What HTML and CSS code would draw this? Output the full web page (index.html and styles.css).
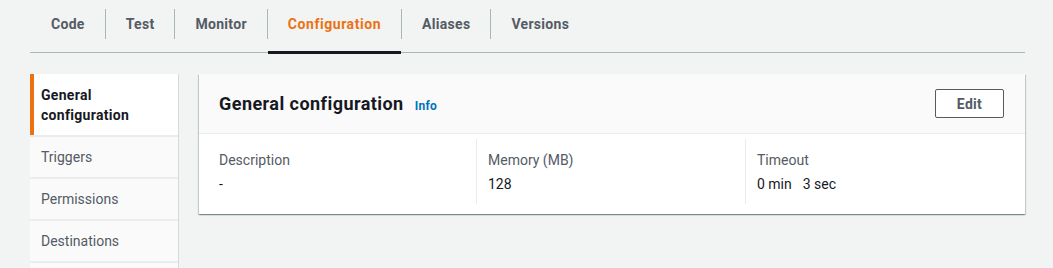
FILE: index.html
```html
<!DOCTYPE html>
<html>
<head>
<meta charset="utf-8">
<link rel="stylesheet" href="styles.css">
</head>
<body>
<div class="tabs">
  <div class="tab"><span class="tab-label first">Code</span></div>
  <div class="tab"><span class="tab-label">Test</span></div>
  <div class="tab"><span class="tab-label">Monitor</span></div>
  <div class="tab active"><span class="tab-label wide">Configuration</span></div>
  <div class="tab"><span class="tab-label">Aliases</span></div>
  <div class="tab"><span class="tab-label">Versions</span></div>
</div>
<div class="main">
  <nav class="sidenav">
    <div class="nav-item active">General<br>configuration</div>
    <div class="nav-item">Triggers</div>
    <div class="nav-item">Permissions</div>
    <div class="nav-item">Destinations</div>
    <div class="nav-item last"></div>
  </nav>
  <section class="card">
    <div class="card-header">
      <div class="card-title"><h2>General configuration</h2><a class="info">Info</a></div>
      <button class="btn">Edit</button>
    </div>
    <div class="card-body">
      <div class="col col-1">
        <div class="label">Description</div>
        <div class="value">-</div>
      </div>
      <div class="col col-2">
        <div class="label">Memory (MB)</div>
        <div class="value">128</div>
      </div>
      <div class="col col-3">
        <div class="label">Timeout</div>
        <div class="value">0 min<span class="gap"></span>3 sec</div>
      </div>
    </div>
  </section>
</div>
</body>
</html>
```

FILE: styles.css
```css
* { box-sizing: border-box; }
html, body { margin: 0; padding: 0; overflow: hidden; }
body {
  background: #f2f3f3;
  font-family: Roboto, "Liberation Sans", sans-serif;
  font-size: 14px;
  color: #16191f;
  width: 1053px;
  height: 268px;
}
.tabs {
  display: flex;
  margin-left: 30px;
  width: 995px;
  height: 53px;
  border-bottom: 1px solid #aab7b8;
}
.tab {
  position: relative;
  padding-top: 9px;
  height: 52px;
}
.tab-label {
  display: block;
  padding: 0 20px;
  line-height: 30px;
  height: 30px;
  border-left: 1px solid #aab7b8;
  font-weight: 700;
  letter-spacing: 0.3px;
  color: #545b64;
}
.tab-label.wide { letter-spacing: 0.55px; }
.tab-label.first { border-left-color: transparent; }
.tab.active .tab-label { color: #ec7211; }
.tab.active::after {
  content: "";
  position: absolute;
  left: 1px;
  right: 0;
  bottom: -2px;
  height: 3px;
  background: #16191f;
}
.main {
  display: flex;
  gap: 20px;
  padding: 21px 28px 0 30px;
}
.sidenav {
  width: 149px;
  display: flex;
  flex-direction: column;
  gap: 2px;
  background: #eaeded;
  border-right: 1px solid #d5dbdb;
}
.nav-item {
  background: #fafafa;
  height: 40px;
  line-height: 40px;
  padding-left: 11px;
  color: #545b64;
  flex: none;
}
.nav-item.active {
  background: #fff;
  height: 61px;
  line-height: 20px;
  padding-top: 11px;
  font-weight: 700;
  letter-spacing: 0.3px;
  color: #16191f;
  border-left: 4px solid #ec7211;
  padding-left: 7px;
}
.card {
  flex: 1;
  align-self: flex-start;
  background: #fff;
  box-shadow: 0 1px 1px 0 rgba(0,28,36,.3), 1px 1px 1px 0 rgba(0,28,36,.15), -1px 1px 1px 0 rgba(0,28,36,.15);
}
.card-header {
  display: flex;
  align-items: center;
  justify-content: space-between;
  height: 60px;
  padding: 0 21px 0 20px;
  background: #fafafa;
  border-bottom: 1px solid #eaeded;
}
.card-title { display: flex; align-items: baseline; gap: 11px; }
.card-title h2 {
  margin: 0;
  font-size: 18px;
  font-weight: 700;
  letter-spacing: 0.45px;
  color: #16191f;
}
.info {
  font-size: 12px;
  font-weight: 700;
  letter-spacing: 0.3px;
  color: #0073bb;
}
.btn {
  font-family: inherit;
  font-size: 14px;
  font-weight: 700;
  letter-spacing: 0.3px;
  color: #545b64;
  background: #fff;
  border: 1px solid #545b64;
  border-radius: 2px;
  width: 69px;
  height: 29px;
  padding: 0;
}
.card-body {
  display: grid;
  grid-template-columns: 257px 269px 1fr;
  padding: 5px 20px 10px 20px;
}
.col {
  padding: 9px 12px 8px 11px;
  border-left: 1px solid #eaeded;
  line-height: 24px;
}
.col-1 { border-left: none; padding-left: 0; }
.label { color: #545b64; }
.value { color: #16191f; }
.gap { display: inline-block; width: 11px; }
```
